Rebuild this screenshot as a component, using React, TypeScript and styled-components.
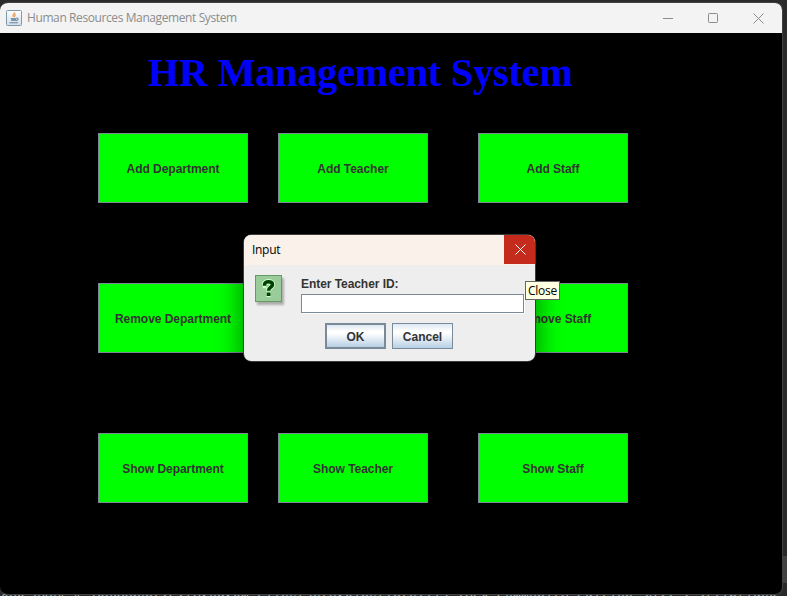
import React from "react";
import styled, { createGlobalStyle } from "styled-components";

const GlobalStyle = createGlobalStyle`
  * { box-sizing: border-box; }
  html, body { margin: 0; width: 787px; height: 596px; overflow: hidden; background: #2b2b2b; }
`;

const Desktop = styled.main`
  position: relative;
  display: flex;
  flex-direction: column;
  width: 787px;
  height: 596px;
  padding-top: 2px;
  overflow: hidden;
  background: linear-gradient(to right, #2b2b2b 783px, #292a2c 783px);
`;

const AppWindow = styled.section`
  position: relative;
  width: 783px;
  height: 593px;
  flex: none;
  border: solid #414141;
  border-width: 1px 1px 1px 0;
  border-radius: 8px;
  background: #000;
  overflow: hidden;
`;

const TitleBar = styled.header`
  display: flex;
  align-items: center;
  height: 30px;
  padding-left: 6px;
  background: #f3f3f3;
  color: #8c8c8c;
`;

const WindowTitle = styled.span`
  flex: 1;
  margin-left: 5px;
  font: 12px/16px "Open Sans", "Noto Sans", sans-serif;
  letter-spacing: -0.4px;
  white-space: nowrap;
`;

const WindowControls = styled.div`
  display: flex;
  gap: 35px;
  margin-right: 18px;
`;

const Content = styled.div`
  display: flex;
  flex-direction: column;
  padding-top: 15px;
`;

const Heading = styled.h1`
  margin: 0 0 0 148px;
  height: 85px;
  color: #0000ff;
  font: bold 40px/50px "Liberation Serif", serif;
  letter-spacing: -0.1px;
  white-space: nowrap;
`;

const ActionGrid = styled.div`
  display: grid;
  grid-template-columns: 180px 200px 150px;
  grid-auto-rows: 70px;
  row-gap: 80px;
  margin-left: 98px;
`;

const ActionButton = styled.button`
  width: 150px;
  height: 70px;
  padding: 2px 0 0;
  border: 1px solid #7a8a99;
  border-radius: 0;
  background: #00ff00;
  color: #333;
  font: bold 12px "Liberation Sans", sans-serif;
  letter-spacing: -0.04px;
`;

const Dialog = styled.section`
  position: absolute;
  left: 244px;
  top: 235px;
  width: 291px;
  height: 126px;
  border-radius: 7px;
  background: #eee;
  overflow: hidden;
`;

const DialogShade = styled.div`
  position: absolute;
  left: 244px;
  top: 235px;
  width: 291px;
  height: 126px;
  border-radius: 8px;
  box-shadow: 0 0 0 1px #3c3c3c, 0 8px 24px 4px rgba(0, 0, 0, 0.4);
`;

const DialogBar = styled.header`
  display: flex;
  justify-content: space-between;
  height: 30px;
  padding-left: 8px;
  background: #f9f1ea;
  color: #000;
  font: 12px/30px "Open Sans", "Noto Sans", sans-serif;
  letter-spacing: -0.3px;
`;

const CloseButton = styled.button`
  display: flex;
  align-items: center;
  justify-content: center;
  width: 31px;
  height: 29px;
  padding: 0 0 0 1px;
  border: 0;
  background: #c42b1c;
  color: #fff;
`;

const DialogBody = styled.div`
  display: flex;
  gap: 15px;
  padding: 10px 11px 0;
`;

const Field = styled.label`
  display: flex;
  flex-direction: column;
  color: #333;
  font: bold 12px/15px "Liberation Sans", sans-serif;
  letter-spacing: -0.06px;
  padding-top: 2px;
`;

const TextInput = styled.input`
  width: 223px;
  height: 19px;
  margin-top: 2px;
  padding: 0 3px;
  border: 1px solid #7a8a99;
  outline: 0;
  border-radius: 0;
  background: #fff;
  box-shadow: 1px 1px 0 #fff;
`;

const DialogActions = styled.footer`
  display: flex;
  gap: 6px;
  margin: 10px 0 0 81px;
`;

const MetalButton = styled.button<{ $primary?: boolean }>`
  width: 61px;
  height: 26px;
  padding: 1px 0 0;
  border: ${(p) => (p.$primary ? 2 : 1)}px solid #7a8a99;
  border-radius: 0;
  background: linear-gradient(#dde8f3 0%, #fff 30%, #fff 38%, #b8cfe5 100%);
  color: #333;
  font: bold 12px "Liberation Sans", sans-serif;
`;

const Tooltip = styled.div`
  position: absolute;
  left: 525px;
  top: 281px;
  width: 35px;
  height: 19px;
  border: 1px solid #646464;
  background: #ffffe1;
  color: #000;
  text-align: center;
  font: 12px/18px "Open Sans", "Noto Sans", sans-serif;
  letter-spacing: -0.3px;
`;

const ConsoleLine = styled.div`
  position: absolute;
  left: 1px;
  top: 590px;
  white-space: pre;
  color: #a9b0b5;
  font: 13px/15px "Liberation Mono", monospace;
  letter-spacing: 0.2px;
`;

const ScrollThumb = styled.div`
  position: absolute;
  left: 783px;
  top: 556px;
  width: 4px;
  height: 27px;
  background: #414244;
`;

const JavaIcon = () => (
  <svg width="16" height="16" viewBox="0 0 16 16">
    <defs>
      <linearGradient id="java-tile" x2="0" y2="1">
        <stop stopColor="#fff" />
        <stop offset="1" stopColor="#d3dde6" />
      </linearGradient>
    </defs>
    <rect x=".5" y=".5" width="15" height="15" rx="1" fill="url(#java-tile)" stroke="#8098ab" />
    <path d="M8.6 2.2c.8 1.7-2.8 2.3-1.3 4.6M9.6 4.2c-1.5 1.1-.2 1.6-1.4 2.8" fill="none" stroke="#e9a05a" strokeWidth="1.3" />
    <path d="M4.6 8.1h5.8l-.6 3H5.4z" fill="#7795ad" />
    <path d="M3.5 12.7h8.4M10.3 8.2c2.6-.4 2.2 2-.2 2.5" fill="none" stroke="#6485a1" strokeWidth="1.1" />
  </svg>
);

const QuestionIcon = () => (
  <svg width="31" height="32" viewBox="0 0 31 32">
    <defs><filter id="soft"><feGaussianBlur stdDeviation="1" /></filter></defs>
    <rect x="2" y="3" width="27" height="27" fill="#777" opacity=".55" filter="url(#soft)" />
    <rect x=".5" y=".5" width="26" height="26" fill="#99cc99" stroke="#669966" />
    <g fill="none">
      <path d="M7.8 10.6h3.4M9.5 10.6v-.8c0-4.1 8-4.1 8-.3 0 2.8-3.9 2.6-3.9 6.2M11.4 19.3h4.4" stroke="#ccffcc" strokeWidth="5.4" />
      <path d="M9.5 10.8v-1c0-4.1 8-4.1 8-.3 0 2.8-3.9 2.6-3.9 6.2M11.7 19.3h3.8" stroke="#004000" strokeWidth="3.6" />
    </g>
  </svg>
);

const Cross = () => (
  <svg width="11" height="11" viewBox="0 0 11 11" fill="none" stroke="currentColor">
    <path d="M.5.5l10 10M10.5.5l-10 10" />
  </svg>
);

const actions = [
  "Add Department", "Add Teacher", "Add Staff",
  "Remove Department", "Remove Teacher", "Remove Staff",
  "Show Department", "Show Teacher", "Show Staff",
];

export default function App() {
  return (
    <>
      <GlobalStyle />
      <Desktop>
        <ConsoleLine>{'ava.exe" "-javaagent:C:\\Program Files\\JetBrains\\IntelliJ IDEA Community Edition 2022.3.2\\lib\\idea'}</ConsoleLine>
        <ScrollThumb />
        <AppWindow>
          <TitleBar>
            <JavaIcon />
            <WindowTitle>Human Resources Management System</WindowTitle>
            <WindowControls>
              <svg width="10" height="11" stroke="currentColor"><path d="M0 5.5h10" /></svg>
              <svg width="10" height="11" fill="none" stroke="currentColor"><rect x=".5" y=".5" width="9" height="9" rx=".8" /></svg>
              <Cross />
            </WindowControls>
          </TitleBar>
          <Content>
            <Heading>HR Management System</Heading>
            <ActionGrid>
              {actions.map((name) => <ActionButton key={name}>{name}</ActionButton>)}
            </ActionGrid>
          </Content>
        </AppWindow>
        <DialogShade />
        <Dialog>
          <DialogBar>
            <span>Input</span>
            <CloseButton aria-label="Close"><Cross /></CloseButton>
          </DialogBar>
          <DialogBody>
            <QuestionIcon />
            <Field>Enter Teacher ID:<TextInput /></Field>
          </DialogBody>
          <DialogActions>
            <MetalButton $primary>OK</MetalButton>
            <MetalButton>Cancel</MetalButton>
          </DialogActions>
        </Dialog>
        <Tooltip>Close</Tooltip>
      </Desktop>
    </>
  );
}
